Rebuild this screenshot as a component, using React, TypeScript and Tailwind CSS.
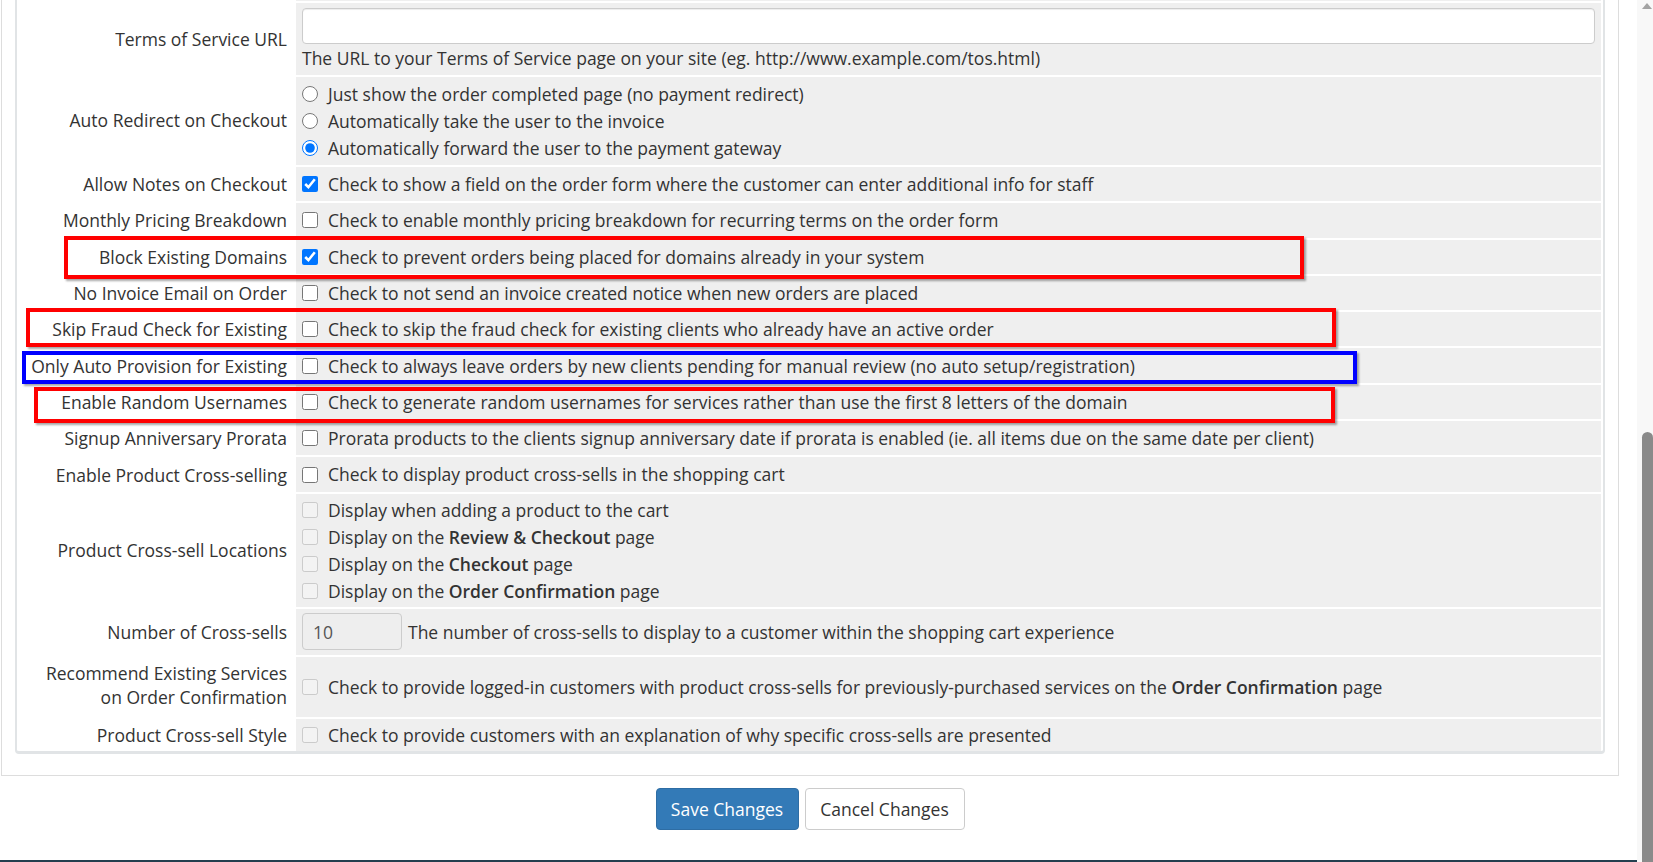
import React from "react";

type Opt = { text: React.ReactNode; checked?: boolean; disabled?: boolean };

function Check({ checked, disabled, radio }: { checked?: boolean; disabled?: boolean; radio?: boolean }) {
  return (
    <input
      type={radio ? "radio" : "checkbox"}
      name={radio ? "autoredirect" : undefined}
      defaultChecked={checked}
      disabled={disabled}
      className="m-0 h-4 w-4 shrink-0"
    />
  );
}

function Row({ label, h, children }: { label: React.ReactNode; h: string; children: React.ReactNode }) {
  return (
    <div className={`mt-[2px] flex ${h}`}>
      <div className="flex w-[279px] shrink-0 items-center justify-end pr-[9px] text-right leading-[24px]">{label}</div>
      <div className="flex flex-1 flex-col justify-center bg-[#efefef] pl-[6px] pr-[6px]">{children}</div>
    </div>
  );
}

function Line({ opt, radio }: { opt: Opt; radio?: boolean }) {
  return (
    <div className="flex h-[27px] items-center">
      <Check checked={opt.checked} disabled={opt.disabled} radio={radio} />
      <span className="ml-[10px] whitespace-nowrap">{opt.text}</span>
    </div>
  );
}

const singles: { label: string; text: string; checked?: boolean }[] = [
  { label: "Allow Notes on Checkout", text: "Check to show a field on the order form where the customer can enter additional info for staff", checked: true },
  { label: "Monthly Pricing Breakdown", text: "Check to enable monthly pricing breakdown for recurring terms on the order form" },
  { label: "Block Existing Domains", text: "Check to prevent orders being placed for domains already in your system", checked: true },
  { label: "No Invoice Email on Order", text: "Check to not send an invoice created notice when new orders are placed" },
  { label: "Skip Fraud Check for Existing", text: "Check to skip the fraud check for existing clients who already have an active order" },
  { label: "Only Auto Provision for Existing", text: "Check to always leave orders by new clients pending for manual review (no auto setup/registration)" },
  { label: "Enable Random Usernames", text: "Check to generate random usernames for services rather than use the first 8 letters of the domain" },
  { label: "Signup Anniversary Prorata", text: "Prorata products to the clients signup anniversary date if prorata is enabled (ie. all items due on the same date per client)" },
  { label: "Enable Product Cross-selling", text: "Check to display product cross-sells in the shopping cart" },
];

export default function App() {
  return (
    <div className="relative flex h-[862px] w-[1653px] overflow-hidden bg-white font-['Open_Sans',sans-serif] text-[17.5px] text-[#333]">
      <div className="flex w-[1637px] flex-col">
        <div className="ml-[1px] w-[1618px] border-x border-b border-[#dddddd] px-[13px] pb-[21px]">
          <div className="rounded-b-[4px] border-x-2 border-b-[3px] border-[#e1e4e6] pr-[2px]">
            {/* sliver of the row above */}
            <div className="flex h-[1px]">
              <div className="w-[279px]" />
              <div className="flex-1 bg-[#efefef]" />
            </div>

            <Row label="Terms of Service URL" h="h-[72px]">
              <input
                type="text"
                className="h-[36px] w-full rounded-[4px] border border-[#cccccc] bg-white px-3 shadow-[inset_0_1px_1px_rgba(0,0,0,0.075)] outline-none"
              />
              <div className="mt-[2px] leading-[25px]">
                The URL to your Terms of Service page on your site (eg. http://www.example.com/tos.html)
              </div>
            </Row>

            <Row label={<span className="mb-[3px]">Auto Redirect on Checkout</span>} h="h-[88px]">
              <Line radio opt={{ text: "Just show the order completed page (no payment redirect)" }} />
              <Line radio opt={{ text: "Automatically take the user to the invoice" }} />
              <Line radio opt={{ text: "Automatically forward the user to the payment gateway", checked: true }} />
            </Row>

            {singles.map((s) => (
              <Row key={s.label} label={s.label} h="h-[34.3px]">
                <Line opt={{ text: s.text, checked: s.checked }} />
              </Row>
            ))}

            <Row label="Product Cross-sell Locations" h="h-[113.5px]">
              <Line opt={{ text: "Display when adding a product to the cart", disabled: true }} />
              <Line
                opt={{
                  text: (
                    <>
                      Display on the <b className="font-semibold">Review &amp; Checkout</b> page
                    </>
                  ),
                  disabled: true,
                }}
              />
              <Line
                opt={{
                  text: (
                    <>
                      Display on the <b className="font-semibold">Checkout</b> page
                    </>
                  ),
                  disabled: true,
                }}
              />
              <Line
                opt={{
                  text: (
                    <>
                      Display on the <b className="font-semibold">Order Confirmation</b> page
                    </>
                  ),
                  disabled: true,
                }}
              />
            </Row>

            <Row label="Number of Cross-sells" h="h-[45.5px]">
              <div className="flex items-center">
                <input
                  type="text"
                  defaultValue="10"
                  disabled
                  className="h-[37px] w-[100px] rounded-[4px] border border-[#cccccc] bg-[#eeeeee] px-[10px] text-[#555]"
                />
                <span className="ml-[6px] whitespace-nowrap">
                  The number of cross-sells to display to a customer within the shopping cart experience
                </span>
              </div>
            </Row>

            <Row
              label={
                <span className="mb-[4px]">
                  Recommend Existing Services
                  <br />
                  on Order Confirmation
                </span>
              }
              h="h-[60px]"
            >
              <Line
                opt={{
                  text: (
                    <>
                      Check to provide logged-in customers with product cross-sells for previously-purchased services on the{" "}
                      <b className="font-semibold">Order Confirmation</b> page
                    </>
                  ),
                  disabled: true,
                }}
              />
            </Row>

            <Row label="Product Cross-sell Style" h="h-[32px]">
              <Line opt={{ text: "Check to provide customers with an explanation of why specific cross-sells are presented", disabled: true }} />
            </Row>
          </div>
        </div>

        <div className="mt-[12px] flex w-[1620px] justify-center gap-[6px]">
          <button className="h-[42px] w-[143px] rounded-[4px] border border-[#2e6da4] bg-[#337ab7] text-white">Save Changes</button>
          <button className="h-[42px] w-[160px] rounded-[4px] border border-[#cccccc] bg-white text-[#333]">Cancel Changes</button>
        </div>

        <div className="flex-1" />
        <div className="h-[2px] bg-[#243f4f]" />
      </div>

      {/* browser scrollbar */}
      <div className="flex w-[16px] flex-col bg-[#f8f8f8]">
        <div className="flex h-[14px] justify-end pr-[1px] pt-[3px]">
          <div className="h-0 w-0 border-x-[5px] border-b-[6px] border-x-transparent border-b-[#a3a3a3]" />
        </div>
        <div className="flex-1" />
        <div className="ml-[5px] h-[430px] rounded-t-[6px] bg-[#8a8a8a]" />
      </div>

      {/* annotation boxes */}
      <div className="absolute left-[64px] top-[236px] h-[43px] w-[1240px] border-4 border-[#ff0000] shadow-[2px_2px_2px_rgba(0,0,0,0.35)]" />
      <div className="absolute left-[26px] top-[308px] h-[39px] w-[1310px] border-4 border-[#ff0000] shadow-[2px_2px_2px_rgba(0,0,0,0.35)]" />
      <div className="absolute left-[22px] top-[351px] h-[33px] w-[1335px] border-4 border-[#0000ff] shadow-[2px_2px_2px_rgba(0,0,0,0.35)]" />
      <div className="absolute left-[34px] top-[387px] h-[36px] w-[1301px] border-4 border-[#ff0000] shadow-[2px_2px_2px_rgba(0,0,0,0.35)]" />
    </div>
  );
}
